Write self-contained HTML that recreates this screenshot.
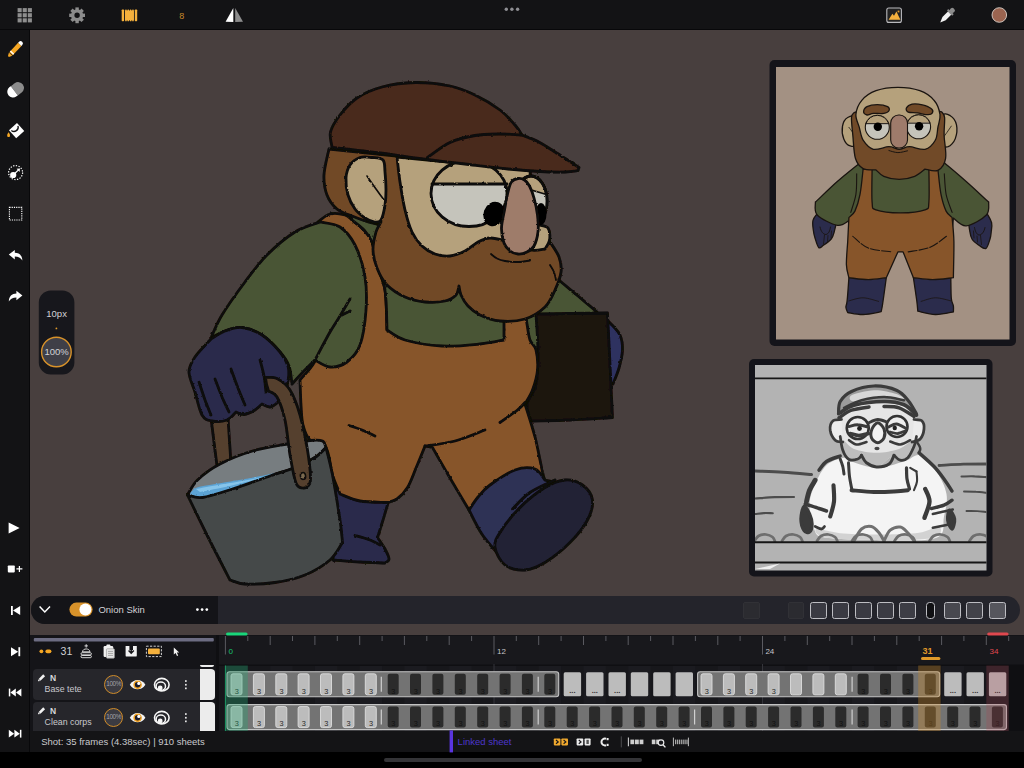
<!DOCTYPE html>
<html><head><meta charset="utf-8"><title>Animation</title>
<style>
*{box-sizing:border-box;margin:0;padding:0}
html,body{width:1024px;height:768px;overflow:hidden;background:#000;font-family:"Liberation Sans",sans-serif;}
.abs{position:absolute}
#app{position:relative;width:1024px;height:768px;background:#483f3e;overflow:hidden}
#top{left:0;top:0;width:1024px;height:30px;background:#131315;border-bottom:1px solid #08080a}
#side{left:0;top:30px;width:30px;height:722px;background:#131315;border-right:1px solid #08080a}
#bottomblack{left:0;top:752px;width:1024px;height:16px;background:#000}
#homebar{left:383.5px;top:758px;width:258px;height:4px;border-radius:2px;background:#343437}
#onion{left:31px;top:596px;width:989px;height:28px;border-radius:14px;background:#24242b;overflow:hidden}
#onionL{left:0;top:0;width:187px;height:28px;background:#141418}
#tl{left:30px;top:635px;width:994px;height:117px;background:#141418}
#status{left:30px;top:731px;width:994px;height:21px;background:#141416}

.t{position:absolute;white-space:nowrap;color:#c9c9cd;font-size:9.5px;line-height:12px}
.lay{position:absolute;left:33px;width:182px;height:31px;background:#26262b;border-radius:4px;overflow:hidden}
.lay .th{position:absolute;left:166.5px;top:0;width:16px;height:31px;background:#ececec;border-radius:0 4px 4px 0}
.oc{position:absolute;width:19px;height:19px;border-radius:50%;border:1.6px solid #d08c2a;background:#3b3b42;color:#a2a2aa;font-size:6.4px;line-height:15.8px;letter-spacing:-0.35px;text-align:center}
.sq{position:absolute;top:5.5px;width:17px;height:17px;border-radius:2.5px;border:1.2px solid #bdbdc2;background:#3b3b43}
.sqd{position:absolute;top:5.5px;width:16.5px;height:17px;border-radius:2px;background:#2b2b30;border:1px solid #313136}

</style></head><body>
<div id="app">
<svg class="abs" style="left:0;top:0" width="1024" height="768" viewBox="0 0 1024 768" stroke-linejoin="round" stroke-linecap="round">
<defs><filter id="rough" x="-2%" y="-2%" width="104%" height="104%"><feTurbulence type="fractalNoise" baseFrequency="0.28" numOctaves="2" seed="4" result="n"/><feDisplacementMap in="SourceGraphic" in2="n" scale="2.2" xChannelSelector="R" yChannelSelector="G"/></filter></defs>
<g filter="url(#rough)">
<path d="M603 316C604.5 317.5 609.2 321.8 612 325C614.8 328.2 618.2 330.8 620 335C621.8 339.2 622.7 344.5 622.5 350C622.3 355.5 620.6 362.3 619 368C617.4 373.7 614 381.3 613 384L603 384Z" fill="#2e3160" stroke="#0d0907" stroke-width="2.8" />
<path d="M515 285C521.3 284 545.5 279.7 553 279C560.5 278.3 558.8 280.7 560 281C563 283.5 571.8 290.8 578 296C584.2 301.2 593.8 309.3 597 312C588.3 315 555 323.3 545 330C535 336.7 542 352 537 352C532 352 518.7 333.7 515 330Z" fill="#4a5535" stroke="#0d0907" stroke-width="2.8" />
<path d="M536 314L607.5 313C607.9 321.7 609.2 347.6 610 365C610.8 382.4 612.1 408.8 612.5 417.5C605.4 417.9 583.6 419.4 570 420C556.4 420.6 537.5 420.8 531 421C530.3 418.2 526.2 410 527 404C527.8 398 534.2 393.7 536 385C537.8 376.3 538 363.8 538 352C538 340.2 536.3 320.3 536 314Z" fill="#1d1510" stroke="#0d0907" stroke-width="2.8" />
<path d="M333 488L388 503C387.2 505.8 384.8 514.2 383 520C381.2 525.8 378.4 534.6 377.5 537.5C378.8 539.4 383.1 545.4 385 549C386.9 552.6 389 556.7 389 559C389 561.3 385.7 562.3 385 563C380.8 562.8 368.7 562.5 360 562C351.3 561.5 337.5 560.3 333 560Z" fill="#2b2c4c" stroke="#0d0907" stroke-width="2.8" />
<path d="M355 535.5C357.5 536.2 365.8 538.4 370 540C374.2 541.6 378.3 544.2 380 545" fill="none" stroke="#0d0907" stroke-width="2.8"/>
<path d="M318 222C320 220.7 325.5 215.2 330 214C334.5 212.8 341.3 214 345 215C348.7 216 350.8 219.2 352 220C354 221.7 360.7 226.3 364 230C367.3 233.7 369.8 236.2 372 242C374.2 247.8 374.8 257 377 265C379.2 273 383.3 279.2 385 290C386.7 300.8 386.7 323.3 387 330L504 330C504 327.7 500.3 318.3 504 316C507.7 313.7 522.3 316 526 316C526.2 317.3 526.3 320 527 324C527.7 328 528.5 335.7 530 340C531.5 344.3 534.8 345 536 350C537.2 355 538.1 363.3 537.5 370C536.9 376.7 534.6 384.3 532.5 390C530.4 395.7 526.2 401.7 525 404C526.7 409.5 532.1 425.7 535 437C537.9 448.3 540.7 464.2 542.5 472C544.3 479.8 545.4 482 546 484L469 510C465.8 504.7 456.1 488.4 450 478C443.9 467.6 435.4 452.6 432.5 447.5L425 446C423.5 449.7 418.9 461.1 416 468C413.1 474.9 410.7 482.3 407.5 487.5C404.3 492.7 400.4 496.5 397 499C393.6 501.5 388.7 501.9 387 502.5C382.5 502.2 367.8 502.4 360 501C352.2 499.6 343.3 495.2 340 494C338.8 490.8 334.8 482.7 332.5 475C330.2 467.3 329.8 453.8 326 448C322.2 442.2 313.8 443.8 310 440C306.2 436.2 304.5 430.8 303 425C301.5 419.2 301.5 412.5 301 405C300.5 397.5 300.2 384.2 300 380C303 375.8 313 368.3 318 355C323 341.7 330 322.2 330 300C330 277.8 320 235 318 222Z" fill="#87552a" stroke="#0d0907" stroke-width="2.8" />
<path d="M425 446C430 445.2 445 443.7 455 441C465 438.3 480 431.8 485 430" fill="none" stroke="#0d0907" stroke-width="2.8"/>
<path d="M500 422.5C502.9 420.4 513.3 413.3 517.5 410C521.7 406.7 523.8 403.8 525 402.5" fill="none" stroke="#0d0907" stroke-width="2.8"/>
<path d="M349 425.5C351.2 426.2 357.7 428.2 362 430C366.3 431.8 372.8 435 375 436" fill="none" stroke="#0d0907" stroke-width="2.8"/>
<path d="M350 214C352.5 215 359.7 218 365 220C370.3 222 379.2 225 382 226C388.3 231.7 399.7 247.7 420 260C440.3 272.3 490 293.3 504 300L504 340C500 340.7 490.3 343 480 344C469.7 345 454.5 346.7 442 346C429.5 345.3 414.2 342.7 405 340C395.8 337.3 390 331.7 387 330C386.7 323.3 386.7 300.8 385 290C383.3 279.2 379.2 273 377 265C374.8 257 374.2 247.8 372 242C369.8 236.2 367.3 233.7 364 230C360.7 226.3 354 221.7 352 220Z" fill="#4a5535" stroke="#0d0907" stroke-width="2.8" />
<path d="M469 510C470.5 507.8 474.5 501.2 478 497C481.5 492.8 483.8 489.5 490 485C496.2 480.5 507.5 472.7 515 470C522.5 467.3 530 467.3 535 469C540 470.7 543.3 478.2 545 480C547.5 481.7 560.8 480 560 490C559.2 500 550 529 540 540C530 551 506.7 553.3 500 556C497.1 552.5 487.7 542.7 482.5 535C477.3 527.3 471.2 514.2 469 510Z" fill="#2e3054" stroke="#0d0907" stroke-width="2.8" />
<path d="M495 547.5C494.2 542.1 495.8 539.2 500 532.5C504.2 525.8 512.5 515 520 507.5C527.5 500 537.5 492.1 545 487.5C552.5 482.9 558.8 480.4 565 480C571.2 479.6 577.9 481.7 582.5 485C587.1 488.3 591.7 494.2 592.5 500C593.3 505.8 591.2 512.9 587.5 520C583.8 527.1 577.1 535.4 570 542.5C562.9 549.6 552.5 557.9 545 562.5C537.5 567.1 531.7 569.6 525 570C518.3 570.4 510 568.8 505 565C500 561.2 495.8 552.9 495 547.5Z" fill="#222236" stroke="#0d0907" stroke-width="2.8" />
<path d="M512.5 509C515.4 506.2 522.9 497.3 530 492.5C537.1 487.7 550.8 482.1 555 480" fill="none" stroke="#0d0907" stroke-width="2.8"/>
<path d="M211 418L228 418L231 464L217.5 470Z" fill="#54412f" stroke="#0d0907" stroke-width="2.8" />
<path d="M187.5 495C189.2 492.5 192.1 485.2 197.5 480C202.9 474.8 210.8 468.8 220 464C229.2 459.2 241.2 454.3 252.5 451C263.8 447.7 277.9 445.8 287.5 444C297.1 442.2 304.2 441 310 440.5C315.8 440 319.8 439.8 322.5 441C325.2 442.2 325.4 446.4 326 447.5C324.2 449.2 320.2 454.2 315 457.5C309.8 460.8 302.5 464.4 295 467.5C287.5 470.6 280.4 472.4 270 476C259.6 479.6 243.8 485.4 232.5 489C221.2 492.6 210 496.5 202.5 497.5C195 498.5 190 495.4 187.5 495Z" fill="#777d80" stroke="#0d0907" stroke-width="2.8" />
<path d="M190 493.5C191.2 492.5 192.8 489.1 197 487.5C201.2 485.9 207 485.4 215 484C223 482.6 234.8 480.8 245 479C255.2 477.2 270.8 474 276 473C275 473.5 277.2 473.3 270 476C262.8 478.7 243.8 485.5 232.5 489C221.2 492.5 209.6 496.2 202.5 497C195.4 497.8 192.1 494.1 190 493.5Z" fill="#5ba3d4"/>
<path d="M196 489C199.2 488.4 206.8 486.9 215 485.5C223.2 484.1 236.2 482.1 245 480.5C253.8 478.9 264.2 476.8 268 476C262 477.6 243.3 482.8 232 485.5C220.7 488.2 205.3 490.9 200 492Z" fill="#86c4ea"/>
<path d="M187.5 495C190.9 502 200.9 522.8 208 537C215.1 551.2 226.3 572.8 230 580C232.5 580.7 237.5 583.6 245 584C252.5 584.4 265 584 275 582.5C285 581 295.8 578.8 305 575C314.2 571.2 323.8 565.4 330 560C336.2 554.6 340.4 545.4 342.5 542.5C342.1 538.8 341.7 531.2 340 520C338.3 508.8 334.8 487.1 332.5 475C330.2 462.9 327.1 452.1 326 447.5C324.2 449.2 320.2 454.2 315 457.5C309.8 460.8 302.5 464.4 295 467.5C287.5 470.6 280.4 472.4 270 476C259.6 479.6 243.8 485.4 232.5 489C221.2 492.6 210 496.5 202.5 497.5C195 498.5 190 495.4 187.5 495Z" fill="#454a4a" stroke="#0d0907" stroke-width="2.8" />
<path d="M320 222C315.8 223.7 303.8 226.5 295 232C286.2 237.5 275.3 246.7 267 255C258.7 263.3 252.5 272 245 282C237.5 292 227.7 305.7 222 315C216.3 324.3 212.8 334.2 211 338C213.3 336.8 219.8 332.8 225 331C230.2 329.2 235.8 326.8 242 327.5C248.2 328.2 255.7 330.9 262 335C268.3 339.1 275.5 346.8 280 352C284.5 357.2 287 360.7 289 366C291 371.3 291.5 381 292 384C293.8 382 299.2 376 303 372C306.8 368 313 362 315 360C317.5 361.2 324.7 366.7 330 367C335.3 367.3 342 365.7 347 362C352 358.3 356.8 353.7 360 345C363.2 336.3 365.2 321.3 366 310C366.8 298.7 366.8 287.8 365 277C363.2 266.2 359.2 253.3 355 245C350.8 236.7 345.8 230.8 340 227C334.2 223.2 323.3 222.8 320 222Z" fill="#4a5535" stroke="#0d0907" stroke-width="2.8" />
<path d="M350 299C348.3 301.8 343.3 310.5 340 316C336.7 321.5 334.2 324.7 330 332C325.8 339.3 317.5 355.3 315 360" fill="none" stroke="#0d0907" stroke-width="2.8"/>
<path d="M342 315L350 311" fill="none" stroke="#0d0907" stroke-width="2.8"/>
<path d="M211 339C213.3 337.7 219.8 332.9 225 331C230.2 329.1 235.8 326.8 242 327.5C248.2 328.2 255.7 330.9 262 335C268.3 339.1 275.7 346.8 280 352C284.3 357.2 286.6 361.7 288 366C289.4 370.3 289 373.7 288.5 378C288 382.3 286.8 388 285 392C283.2 396 280.5 399.5 278 402C275.5 404.5 272.7 406.7 270 407C267.3 407.3 263.3 404.5 262 404C260.8 405 258 408.2 255 410C252 411.8 247.2 414.2 244 414.5C240.8 414.8 237.3 412.4 236 412C234.5 413.3 231 418.5 227 420C223 421.5 216.2 421.8 212 421C207.8 420.2 204.8 419.8 202 415C199.2 410.2 197.2 399.2 195 392C192.8 384.8 189 377.8 189 372C189 366.2 191.3 362.5 195 357C198.7 351.5 208.3 342 211 339Z" fill="#2b2c4c" stroke="#0d0907" stroke-width="2.8" />
<path d="M199 382C200 385 203 394.5 205 400C207 405.5 210 412.5 211 415" fill="none" stroke="#0d0907" stroke-width="2.8"/>
<path d="M215 379C216.2 382 219.7 391.5 222 397C224.3 402.5 227.8 409.5 229 412" fill="none" stroke="#0d0907" stroke-width="2.8"/>
<path d="M231 369C232.2 372.2 235.7 382 238 388C240.3 394 243.8 402.2 245 405" fill="none" stroke="#0d0907" stroke-width="2.8"/>
<path d="M260 360C260.7 362.7 263 370.7 264 376C265 381.3 265.7 389.3 266 392" fill="none" stroke="#0d0907" stroke-width="2.8"/>
<path d="M265.5 377.5C267.4 377.7 272.9 376.4 277 378.5C281.1 380.6 286.2 383.9 290 390C293.8 396.1 297.1 405 300 415C302.9 425 305.8 439.5 307.5 450C309.2 460.5 310.4 472 310.5 478C310.6 484 309.3 484.3 308 486C306.7 487.7 304.5 488.5 302.5 488C300.5 487.5 298.1 488.5 296 483C293.9 477.5 291.8 465.5 290 455C288.2 444.5 287.2 429.7 285 420C282.8 410.3 279.8 401.8 277 397C274.2 392.2 269.9 392 268.5 391C268.2 389.8 267 386.2 266.5 384C266 381.8 265.7 378.6 265.5 377.5Z" fill="#54412f" stroke="#0d0907" stroke-width="2.8" />
<ellipse cx="303" cy="476" rx="2.6" ry="3.4" fill="#7a6a50" stroke="#0d0907" stroke-width="1.5" transform="rotate(-10 303 476)"/>
<path d="M329 149C328.2 153.3 324.3 167.3 324 175C323.7 182.7 324.8 189.3 327 195C329.2 200.7 332.8 205.5 337 209C341.2 212.5 346.2 213.7 352 216C357.8 218.3 367.2 222 372 223C376.8 224 379.5 222.2 381 222C380.2 223.7 377.3 227.3 376 232C374.7 236.7 372.8 244 373 250C373.2 256 374.7 262.2 377 268C379.3 273.8 382.3 280.2 387 285C391.7 289.8 398.7 294.2 405 297C411.3 299.8 418.3 301.3 425 302C431.7 302.7 439.8 302.2 445 301C450.2 299.8 453.7 297.5 456 295C458.3 292.5 458.5 287.5 459 286C459.3 287.5 459.5 291.7 461 295C462.5 298.3 464.8 302.7 468 306C471.2 309.3 474.7 312.5 480 315C485.3 317.5 492.5 320.3 500 321C507.5 321.7 517.5 321.3 525 319C532.5 316.7 540 311.8 545 307C550 302.2 552.3 295.8 555 290C557.7 284.2 560.3 277.5 561 272C561.7 266.5 560.8 262 559 257C557.2 252 551.5 244.5 550 242C548.7 240.3 545 236.5 542 232C539 227.5 534 225.3 532 215C530 204.7 530.3 177.5 530 170L329 149Z" fill="#714a28" stroke="#0d0907" stroke-width="2.8" />
<path d="M383 160C380.8 157.6 375.8 157.9 372 157.5C368.2 157.1 363.7 156.2 360 157.5C356.3 158.8 352.3 161.6 350 165C347.7 168.4 346.3 173 346 178C345.7 183 346.5 189.8 348 195C349.5 200.2 352.2 205.2 355 209C357.8 212.8 361.8 215.8 365 218C368.2 220.2 371.3 221.7 374 222C376.7 222.3 379.2 222.8 381 220C382.8 217.2 384.2 210 385 205C385.8 200 386 195.5 386 190C386 184.5 385.5 177 385 172C384.5 167 385.2 162.4 383 160Z" fill="#b5a17c" stroke="#0d0907" stroke-width="2.8" />
<path d="M367 176C368.5 178.2 373.2 185 376 189C378.8 193 382.7 198.2 384 200" fill="none" stroke="#0d0907" stroke-width="1.6"/>
<path d="M397 157L530 170C530.2 173.3 530.5 183 531 190C531.5 197 531.7 206.2 533 212C534.3 217.8 538 222.8 539 225C540.5 225.5 546.2 225.5 548 228C549.8 230.5 550 236.5 549.5 240C549 243.5 545.8 247.5 545 249C542.5 249.2 536.7 251.3 530 250C523.3 248.7 511.7 243 505 241C498.3 239 494.5 237.8 490 238C485.5 238.2 482.2 239.8 478 242C473.8 244.2 469.7 248.7 465 251C460.3 253.3 455 255.5 450 256C445 256.5 439.7 255.7 435 254C430.3 252.3 425.8 249.7 422 246C418.2 242.3 414.8 238 412 232C409.2 226 407 218.3 405 210C403 201.7 401.3 190.8 400 182C398.7 173.2 397.5 161.2 397 157Z" fill="#b5a17c" stroke="#0d0907" stroke-width="2.8" />
<defs><clipPath id="lid2"><path d="M510 190.5L535 190.5L548 194.5L560 194L560 240L510 240Z"/></clipPath><clipPath id="lid1"><rect x="420" y="184" width="100" height="60"/></clipPath></defs>
<ellipse cx="531" cy="201" rx="16" ry="25" fill="#b5a17c" stroke="#0d0907" stroke-width="2.8"/>
<ellipse cx="531" cy="201" rx="16" ry="25" fill="#c5c4bb" clip-path="url(#lid2)"/>
<path d="M533 190.5L546.5 194.5" fill="none" stroke="#0d0907" stroke-width="1.8"/>
<ellipse cx="531" cy="201" rx="16" ry="25" fill="none" stroke="#0d0907" stroke-width="2.8"/>
<ellipse cx="541" cy="214" rx="5.5" ry="11" fill="#000"/>
<ellipse cx="469" cy="193.5" rx="38" ry="33" fill="#b5a17c"/>
<ellipse cx="469" cy="193.5" rx="38" ry="33" fill="#c5c4bb" clip-path="url(#lid1)"/>
<path d="M432 184L507 184" fill="none" stroke="#0d0907" stroke-width="2.8"/>
<ellipse cx="469" cy="193.5" rx="38" ry="33" fill="none" stroke="#0d0907" stroke-width="2.8"/>
<ellipse cx="494" cy="214" rx="10.5" ry="12.5" fill="#000" transform="rotate(20 494 214)"/>
<path d="M518 178.5C515.8 178.8 513.2 179.8 511.5 182C509.8 184.2 509.2 187.3 508 192C506.8 196.7 505.6 204 504.5 210C503.4 216 501.6 222.5 501.5 228C501.4 233.5 502.6 239.2 504 243C505.4 246.8 507.7 249.2 510 251C512.3 252.8 515.2 253.8 518 254C520.8 254.2 524.3 253.3 527 252C529.7 250.7 532.2 249.3 534 246C535.8 242.7 537.4 237.2 538 232C538.6 226.8 538.2 220.7 537.5 215C536.8 209.3 535.3 202.8 534 198C532.7 193.2 531.1 189 529.5 186C527.9 183 526.4 181.2 524.5 180C522.6 178.8 520.2 178.2 518 178.5Z" fill="#9e7b6b" stroke="#0d0907" stroke-width="2.8" />
<path d="M491 254C492 254.8 494.7 257.3 497 258.5C499.3 259.7 501.5 260.4 505 261C508.5 261.6 513.8 262.1 518 262C522.2 261.9 528 260.8 530 260.5" fill="none" stroke="#0d0907" stroke-width="1.8"/>
<path d="M550 265C550.7 266.2 553 269.5 554 272C555 274.5 555.7 278.7 556 280" fill="none" stroke="#0d0907" stroke-width="1.8"/>
<path d="M332 147C331.8 144.5 329.2 137.3 330.5 132C331.8 126.7 335.6 120.7 340 115C344.4 109.3 350 102.7 357 98C364 93.3 372.3 89.6 382 87C391.7 84.4 403.7 82.7 415 82.5C426.3 82.3 440 83.9 450 86C460 88.1 466.7 91 475 95C483.3 99 493.3 105 500 110C506.7 115 511.3 120.8 515 125C518.7 129.2 520.8 133.3 522 135C524.5 136 532 138.5 537 141C542 143.5 547.2 147 552 150C556.8 153 561.5 156.1 566 159C570.5 161.9 576.8 166.1 579 167.5L578 170.5C575.8 170.8 571.3 171.8 565 172C558.7 172.2 549.5 172 540 171.5C530.5 171 520.5 170.2 508 169C495.5 167.8 479.2 165.7 465 164C450.8 162.3 437.2 160.8 423 159C408.8 157.2 395.2 154.9 380 153C364.8 151.1 340 148.4 332 147.5Z" fill="#48291c" stroke="#0d0907" stroke-width="2.8" />
<path d="M427.5 157.5C431.2 155 442.1 146.2 450 142.5C457.9 138.8 466.7 136.9 475 135.5C483.3 134.1 492.2 134.1 500 134C507.8 133.9 518.3 134.8 522 135" fill="none" stroke="#0d0907" stroke-width="2.8"/>
</g>
<rect x="769.5" y="60" width="246.5" height="286" rx="5" fill="#14141a"/>
<rect x="776" y="67" width="233.5" height="272.5" fill="#a39183"/>
<path d="M820 208C817.3 208.1 819.2 210.4 818 212.5C816.8 214.6 813.8 217.4 813 220.3C812.2 223.2 813 227.1 813.3 230C813.6 232.9 814.1 235.1 815 238C815.9 240.9 817.4 246.5 818.8 247.7C820.1 248.9 821.3 246.8 823.4 245.3C825.5 243.9 829.4 241.3 831.2 239C833.1 236.7 833.6 234.1 834.4 231.2C835.2 228.4 836.1 225.2 836 222C835.9 218.8 836.7 214.3 834 212C831.3 209.7 822.7 207.9 820 208Z" fill="#2b2c4c" stroke="#1a1410" stroke-width="1.3"/>
<path d="M984 208C986.6 208.2 985.6 210.9 986.9 213.3C988.2 215.8 990.9 219.6 991.6 222.7C992.3 225.8 991.5 229.3 991.2 232C990.9 234.7 990.9 236.3 990 239C989.1 241.7 987.8 247.3 986 248.4C984.2 249.5 981.3 246.9 979 245.3C976.7 243.7 973.6 241.6 972 239C970.4 236.4 970.1 232.8 969.6 230C969.1 227.2 968.6 225 968.8 222C969 219 968.5 214.3 971 212C973.5 209.7 981.4 207.8 984 208Z" fill="#2b2c4c" stroke="#1a1410" stroke-width="1.3"/>
<path d="M820 227C821 232 823.5 234.5 826 234.5C828.5 234 830 231 830.5 227" fill="none" stroke="#1a1410" stroke-width="0.9" />
<path d="M824.5 235L823.5 244M828 235.5L827.5 241.5M831.5 231L831 237.5" fill="none" stroke="#1a1410" stroke-width="0.8" />
<path d="M985 227.5C984 232.5 981.5 235 979 235C976.5 234.5 975 231 974.5 227.5" fill="none" stroke="#1a1410" stroke-width="0.9" />
<path d="M980.5 235.5L981.5 244.5M977 236L977.5 242M973.5 231L974 238" fill="none" stroke="#1a1410" stroke-width="0.8" />
<path d="M859.3 163.4C855.6 166.4 844.6 175 837.3 181.5C830 187.9 819.1 198.7 815.4 202.1C815.7 204.3 813.6 211.1 817.2 215C820.9 218.9 832.1 224.4 837.3 225.3C842.6 226.3 847 221.4 848.9 220.7L850.8 230.5L952.1 230.5L953.4 218.1C955.5 219.4 960.8 226.3 966.2 225.8C971.8 225.3 982.6 219 986.4 215C990.1 211 988.3 204.3 988.7 202.1C984.9 198.7 973.5 187.9 966.2 181.5C959 175 948.6 166.4 945.1 163.4C937.9 161.7 916.1 153.1 901.8 153.1C887.5 153.1 866.3 161.7 859.3 163.4Z" fill="#4a5535" stroke="#1a1410" stroke-width="1.3"/>
<path d="M856.7 173.8C856.6 177.2 856.9 187.9 855.9 194.4C854.9 200.8 851.6 209.4 850.8 212.4" fill="none" stroke="#1a1410" stroke-width="1.1" />
<path d="M944.3 173.8C944.6 177.2 944.9 187.9 946.1 194.4C947.4 200.8 951.1 209.4 952.1 212.4" fill="none" stroke="#1a1410" stroke-width="1.1" />
<path d="M848.9 277.7C848.6 281.5 847.7 295.9 847.1 300.9C846.6 305.8 845.8 305.4 845.9 307.3C845.9 309.2 847.4 311.6 847.7 312.5C850.2 312.8 857.5 314.7 863.1 314.5C868.7 314.4 878.2 312.2 881.2 311.7C881.4 310.3 881.9 309.1 882.7 303.4C883.6 297.8 885.7 282 886.3 277.7Z" fill="#2b2c4c" stroke="#1a1410" stroke-width="1.3"/>
<path d="M913.4 277.7C914 281.5 916 295.3 916.8 300.9C917.5 306.4 917.6 309.5 917.8 311.2C920.7 311.7 929.4 314.4 935.3 314.5C941.2 314.7 950.4 312.4 953.4 311.9C953.4 311 953.7 308.3 953.4 306C953 303.7 951.7 303 951.3 298.3C950.9 293.6 950.9 281.1 950.8 277.7Z" fill="#2b2c4c" stroke="#1a1410" stroke-width="1.3"/>
<path d="M848.9 300.9C851.3 300.3 858.2 297.7 863.1 297.8C868.1 297.9 876 300.8 878.6 301.4" fill="none" stroke="#1a1410" stroke-width="0.8" />
<path d="M921.1 301.4C923.5 300.8 930.4 297.9 935.3 297.8C940.3 297.7 948.2 300.3 950.8 300.9" fill="none" stroke="#1a1410" stroke-width="0.8" />
<path d="M863.1 169.1L872.1 169.1C872.1 174.6 871.5 195.3 872.1 202.1C872.8 208.9 871.3 208 876 209.8C880.7 211.6 892.3 212.9 900.5 212.9C908.7 212.9 920.3 211.6 925 209.8C929.7 208 928.2 208.9 928.9 202.1C929.5 195.3 928.9 174.6 928.9 169.1L937.9 169.1C938.4 173.3 939.6 187.4 941 194.4C942.4 201.4 944.3 207.3 946.1 211.1C948 215 951.1 216.5 952.1 217.6L952.1 217.6C952.4 221.6 953.7 231.6 953.9 241.6C954.1 251.6 953.4 271.6 953.4 277.7C949.9 278 939.4 279.7 932.7 279.7C926.1 279.7 916.6 278 913.4 277.7L903.1 251.9L897.9 251.9L886.3 277.7C883.3 278 874.5 279.7 868.3 279.7C862.1 279.7 852.2 278 848.9 277.7C848.5 275.5 846.6 270.8 846.4 264.8C846.2 258.8 847.2 249.4 847.7 241.6C848.1 233.7 848.7 221.6 848.9 217.6L848.9 217.6C849.9 216.5 853 215 854.9 211.1C856.7 207.3 858.7 201.4 860 194.4C861.4 187.4 862.6 173.3 863.1 169.1Z" fill="#87552a" stroke="#1a1410" stroke-width="1.3"/>
<path d="M852.8 236.4C855.4 238.3 861.8 245.4 868.3 248C874.7 250.6 887.6 251.2 891.5 251.9" fill="none" stroke="#1a1410" stroke-width="1.1" stroke-dasharray="9 2"/>
<path d="M908.2 251.9C911.9 251.1 923.7 249.9 930.2 247.2C936.6 244.6 944.1 237.8 946.9 235.9" fill="none" stroke="#1a1410" stroke-width="1.1" stroke-dasharray="9 2"/>
<path d="M855.9 118.3C854.3 114.1 849.9 116.3 847.7 117.5C845.4 118.8 843.1 122.5 842.5 126.1C841.9 129.6 842.5 135.6 843.8 138.9C845.1 142.3 848 145.3 850.2 145.9C852.5 146.6 856.5 147.4 857.5 142.8C858.4 138.2 857.5 122.5 855.9 118.3Z" fill="#b5a17c" stroke="#1a1410" stroke-width="1.3"/>
<path d="M941.8 116.5C943.2 112 947.8 114.4 950.3 115.7C952.7 117.1 955.6 120.9 956.5 124.8C957.3 128.6 956.5 135.3 955.2 138.9C953.8 142.6 950.4 146 948.2 146.7C946 147.3 942.8 147.8 941.8 142.8C940.7 137.8 940.3 121 941.8 116.5Z" fill="#b5a17c" stroke="#1a1410" stroke-width="1.3"/>
<path d="M848.9 127.3C849.6 128.2 851.7 131 852.8 132.5C854 134 855.4 135.7 855.9 136.4" fill="none" stroke="#1a1410" stroke-width="0.8" />
<path d="M951.3 126.1C950.6 127.1 948.2 130.7 946.9 132.5C945.6 134.3 944.1 136.4 943.6 137.1" fill="none" stroke="#1a1410" stroke-width="0.8" />
<path d="M854.1 112.6C853.7 113.5 851.7 113.8 851.5 117.5C851.3 121.3 852.2 128.3 852.8 135.1C853.5 141.9 853.7 152.7 855.4 158.3C857.1 163.9 859.7 166.7 863.1 168.6C866.6 170.5 873.9 169.7 876 169.9C877.3 171 879.9 174.7 883.8 176.3C887.6 177.9 894.1 179.4 899.2 179.4C904.4 179.4 910.4 178 914.7 176.3C919 174.6 923.3 170.3 925 169.1C927.1 169.3 934.5 172.2 937.9 170.4C941.3 168.6 944.6 164.2 945.6 158.3C946.7 152.4 944.2 141.9 944.1 135.1C943.9 128.3 945 121.4 944.6 117.5C944.2 113.7 942.2 112.8 941.8 111.9C934.5 110.2 912.5 101.4 897.9 101.6C883.3 101.7 861.4 110.8 854.1 112.6Z" fill="#714a28" stroke="#1a1410" stroke-width="1.3"/>
<path d="M897.9 87.4C890.6 87.4 882 88.6 876 90.7C870 92.9 865.2 96.3 861.8 100.3C858.5 104.2 856.3 109.9 855.9 114.5C855.5 119 858.1 123 859.3 127.3C860.5 131.6 860.8 136.6 863.1 140.2C865.5 143.9 869.1 148.2 873.4 149.3C877.7 150.3 884.6 146.7 888.9 146.7C893.2 146.7 895.8 149.3 899.2 149.3C902.7 149.3 905.2 146.7 909.5 146.7C913.8 146.7 920.7 150.3 925 149.3C929.3 148.2 933.2 143.9 935.3 140.2C937.5 136.6 937.1 131.6 937.9 127.3C938.7 123 940.6 119 940 114.5C939.3 109.9 937.4 104.2 934 100.3C930.7 96.3 925.9 92.9 919.8 90.7C913.8 88.6 905.2 87.4 897.9 87.4Z" fill="#b5a17c" stroke="#1a1410" stroke-width="1.3"/>
<path d="M863.6 111.9C863.6 110.5 864.7 107.9 867 106.7C869.3 105.5 873.9 104.7 877.3 104.7C880.7 104.7 885.7 105.7 887.6 106.7C889.6 107.8 889.6 109.7 888.9 110.8C888.3 112 886.3 113 883.8 113.4C881.2 113.9 876.2 113.2 873.4 113.4C870.6 113.7 868.6 115.2 867 115C865.4 114.7 863.6 113.2 863.6 111.9Z" fill="#714a28" stroke="#1a1410" stroke-width="1.3"/>
<path d="M906.4 108C907.1 106.7 909.4 104.7 912.1 104.1C914.8 103.6 919.2 104.1 922.4 104.9C925.6 105.7 929.8 107.4 931.4 108.8C933.1 110.2 932.9 112.2 932.2 113.2C931.6 114.2 930.1 114.8 927.6 114.7C925.1 114.7 920.5 113.3 917.3 112.9C914 112.5 910 112.9 908.2 112.1C906.4 111.3 905.8 109.3 906.4 108Z" fill="#714a28" stroke="#1a1410" stroke-width="1.3"/>
<circle cx="877.3" cy="127.3" r="12" fill="#c5c4bb" stroke="#1a1410" stroke-width="1.1"/>
<path d="M866 123.3A12 12 0 0 1 888.6 123.3Z" fill="#b5a17c" stroke="#1a1410" stroke-width="1"/>
<circle cx="877.8" cy="126.8" r="4.2" fill="#000"/>
<circle cx="918.6" cy="126.8" r="12" fill="#c5c4bb" stroke="#1a1410" stroke-width="1.1"/>
<path d="M907.3 122.8A12 12 0 0 1 929.9 122.8Z" fill="#b5a17c" stroke="#1a1410" stroke-width="1"/>
<circle cx="919.1" cy="126.3" r="4.2" fill="#000"/>
<rect x="890.7" y="115" width="16.8" height="33" rx="8" fill="#9e7b6b" stroke="#1a1410" stroke-width="1.1"/>
<path d="M888.9 150.5C890.4 150.9 894.8 152.6 897.9 152.6C901 152.7 905.9 151.1 907.5 150.8" fill="none" stroke="#1a1410" stroke-width="1" />
<rect x="749" y="359" width="243.5" height="217.5" rx="5" fill="#14141a"/>
<rect x="755" y="365" width="231.5" height="205.5" fill="#b3b3b3"/>
<clipPath id="p2c"><rect x="755" y="365" width="231.5" height="205.5"/></clipPath><g clip-path="url(#p2c)">
<path d="M755.2 471C759.9 471.2 774 471.7 783.4 472.2C792.8 472.8 806.8 474.1 811.5 474.5" fill="none" stroke="#4c4c4c" stroke-width="3.036" opacity="1"/>
<path d="M755.2 498.5C758.5 498.3 768.2 497.5 774.6 497.2C781.1 497 790.8 497 794 497" fill="none" stroke="#4c4c4c" stroke-width="2.2079999999999997" opacity="1"/>
<path d="M755.2 514C756.7 513.9 761.1 513.2 764 513.1C766.9 513 771.3 513.2 772.8 513.2" fill="none" stroke="#4c4c4c" stroke-width="2.07" opacity="1"/>
<path d="M939 465.5C943.1 465.3 955.2 464.5 963.4 464.2C971.5 464 983.7 464 987.8 464" fill="none" stroke="#4c4c4c" stroke-width="2.76" opacity="1"/>
<path d="M961.5 476.5C963.7 476.5 970.2 476.2 974.6 476.4C979 476.5 985.6 477.1 987.8 477.2" fill="none" stroke="#4c4c4c" stroke-width="2.07" opacity="1"/>
<path d="M964 491.5C966 491.5 971.9 491.5 975.9 491.8C979.8 492 985.8 492.8 987.8 493" fill="none" stroke="#4c4c4c" stroke-width="1.9319999999999997" opacity="1"/>
<path d="M966.5 511C968.3 511 973.6 510.9 977.1 511.1C980.7 511.3 986 512.1 987.8 512.2" fill="none" stroke="#4c4c4c" stroke-width="1.9319999999999997" opacity="1"/>
<path d="M844 457.8C839.8 458.4 831.3 460.9 826.5 465.2C821.7 469.6 818.1 477.5 815.2 484C812.4 490.5 809.7 496.5 809.5 504C809.3 511.5 811.2 523.4 814 529C816.8 534.6 814.8 535.9 826.5 537.8C838.2 539.6 865.7 540.2 884 540.2C902.3 540.2 926.5 541.7 936.5 537.8C946.5 533.8 942.3 523.8 944 516.5C945.7 509.2 947.8 501.5 946.5 494C945.2 486.5 940.9 478 936.5 471.5C932.1 465 925.7 456.9 920.2 455.2C914.8 453.6 911.3 459.4 904 461.5C896.7 463.6 885.2 467.8 876.5 467.8C867.8 467.8 856.9 463.2 851.5 461.5C846.1 459.8 848.2 457.1 844 457.8Z" fill="#f4f4f4" stroke="#3b3b3b" stroke-width="0.0" opacity="1"/>
<path d="M816.5 529C813.6 529.7 815.2 535.9 826.5 537.8C837.8 539.6 866.1 540.2 884 540.2C901.9 540.2 924.8 540 934 537.8C943.2 535.5 941.5 527.3 939 526.5C936.5 525.7 928.2 531.4 919 532.8C909.8 534.1 896.5 534.4 884 534.5C871.5 534.6 855.2 534.4 844 533.5C832.8 532.6 819.4 528.3 816.5 529Z" fill="#d2d2d2" stroke="#3b3b3b" stroke-width="0.0" opacity="1"/>
<path d="M840.2 416.5C838.8 422.5 841.3 431.9 842.8 439C844.2 446.1 845.9 456 849 459C852.1 462 856.9 455.7 861.5 457C866.1 458.3 871.5 467 876.5 467C881.5 467 886.7 458.2 891.5 457C896.3 455.8 901.5 462.5 905.2 459.5C909 456.5 912.1 446.2 914 439C915.9 431.8 918.2 422.5 916.5 416.5C914.8 410.5 910.7 405.7 904 402.8C897.3 399.8 885.2 399 876.5 399C867.8 399 857.5 399.8 851.5 402.8C845.5 405.7 841.7 410.5 840.2 416.5Z" fill="#e6e6e6" stroke="#3b3b3b" stroke-width="0.0" opacity="1"/>
<path d="M842.8 440.2C841.9 441.9 845.9 456.2 849 459C852.1 461.8 856.9 455.7 861.5 457C866.1 458.3 871.5 467 876.5 467C881.5 467 886.7 458.2 891.5 457C896.3 455.8 901.6 462.3 905.2 459.5C908.9 456.7 914.5 442 913.5 440.2C912.5 438.5 905.2 446.9 899 449C892.8 451.1 884 452.8 876.5 452.8C869 452.8 859.6 451.1 854 449C848.4 446.9 843.6 438.6 842.8 440.2Z" fill="#bdbdbd" stroke="#3b3b3b" stroke-width="0.0" opacity="1"/>
<path d="M841.5 419.5C840 419.8 834.6 419.2 832.8 421C830.9 422.8 829.8 427 830.2 430.2C830.7 433.5 833.2 438.3 835.2 440.2C837.3 442.2 841.5 441.7 842.8 442" fill="#ececec" stroke="#3b3b3b" stroke-width="2.76" opacity="1"/>
<path d="M914 419.5C915.3 419.8 920.3 419.4 922 421C923.7 422.6 924.3 426 924 429C923.7 432 922.2 436.8 920.2 439C918.2 441.2 913.4 441.5 912 442" fill="#ececec" stroke="#3b3b3b" stroke-width="2.76" opacity="1"/>
<path d="M839 412.8C836.3 412.1 838.2 405.1 840.2 401.5C842.3 397.9 845.9 393.6 851.5 391C857.1 388.4 866.5 386.1 874 386C881.5 385.9 890.9 387.9 896.5 390.2C902.1 392.6 904.4 396.5 907.8 400.2C911.1 404 916.3 411.5 916.5 412.8C916.7 414 914.4 409.4 909 407.8C903.6 406.1 892.8 403.2 884 402.8C875.2 402.3 864 403.6 856.5 405.2C849 406.9 841.7 413.4 839 412.8Z" fill="#9c9c9c" stroke="#3b3b3b" stroke-width="0.0" opacity="1"/>
<path d="M851.5 395.2C854.8 393.4 866.5 390.5 874 390.2C881.5 390 891.5 392.3 896.5 394C901.5 395.7 906.9 399.8 904 400.2C901.1 400.8 887.3 396.8 879 397C870.7 397.2 858.6 401.8 854 401.5C849.4 401.2 848.2 397.1 851.5 395.2Z" fill="#d8d8d8" stroke="#3b3b3b" stroke-width="0.0" opacity="1"/>
<path d="M838.5 414C838.8 411.9 838.1 405.2 840.2 401.5C842.4 397.8 845.9 394.1 851.5 391.5C857.1 388.9 866.4 386.2 874 386C881.6 385.8 891.2 388 897 390.5C902.8 393 905.2 397.1 908.5 401C911.8 404.9 915.2 411.8 916.5 414" fill="none" stroke="#3b3b3b" stroke-width="3.2199999999999998" opacity="1"/>
<path d="M840.2 412.8C842.5 411.5 846.7 407.1 854 405.2C861.3 403.4 875.7 401.6 884 401.5C892.3 401.4 898.6 402.5 904 404.8C909.4 407 914.4 413.5 916.5 415.2" fill="none" stroke="#3b3b3b" stroke-width="3.6799999999999997" opacity="1"/>
<path d="M844 407.8C846.9 406.5 854.8 402 861.5 400.2C868.2 398.5 876.9 397 884 397C891.1 397 900.7 399.7 904 400.2" fill="none" stroke="#3b3b3b" stroke-width="2.53" opacity="1"/>
<path d="M839 417.8C841.1 416.5 846.5 412 851.5 410.2C856.5 408.5 866.1 407.5 869 407" fill="none" stroke="#3b3b3b" stroke-width="3.4499999999999997" opacity="1"/>
<path d="M884 406.5C886.5 406.7 894 406.1 899 407.8C904 409.4 911.5 415 914 416.5" fill="none" stroke="#3b3b3b" stroke-width="3.4499999999999997" opacity="1"/>
<circle cx="857.75" cy="428.0" r="11" fill="#ededed" stroke="#333" stroke-width="2.6"/>
<circle cx="897.0" cy="426.5" r="10.5" fill="#ededed" stroke="#333" stroke-width="2.6"/>
<path d="M868.5 422.8C870 422.2 874.7 419.6 877.8 419.5C880.8 419.4 885.5 421.6 887 422" fill="none" stroke="#3b3b3b" stroke-width="2.76" opacity="1"/>
<path d="M849 426.5C850.5 426.2 854.6 424.7 857.8 424.8C860.9 424.8 866.1 426.6 867.8 427" fill="none" stroke="#3b3b3b" stroke-width="2.9899999999999998" opacity="1"/>
<path d="M850.2 433.5C851.7 433.8 856 435.5 859 435.5C862 435.5 866.9 433.8 868.5 433.5" fill="none" stroke="#3b3b3b" stroke-width="3.6799999999999997" opacity="1"/>
<circle cx="859.5" cy="428.5" r="2.4" fill="#222"/>
<path d="M888.5 427C889.8 426.5 893.6 423.8 896.5 424C899.4 424.2 904.4 427.8 906 428.5" fill="none" stroke="#3b3b3b" stroke-width="2.9899999999999998" opacity="1"/>
<path d="M890.2 432C891.5 432.2 895.2 433.7 897.8 433.5C900.2 433.3 904 431.4 905.2 431" fill="none" stroke="#3b3b3b" stroke-width="2.76" opacity="1"/>
<circle cx="894.75" cy="428.0" r="2.2" fill="#222"/>
<path d="M877.8 422.8C875.8 422.8 873 426.5 872 429C871 431.5 870.5 435.5 871.5 437.8C872.5 440 875.7 442.8 877.8 442.8C879.8 442.8 883 440 884 437.8C885 435.5 885 431.5 884 429C883 426.5 879.8 422.8 877.8 422.8Z" fill="#f2f2f2" stroke="#3b3b3b" stroke-width="2.9899999999999998" opacity="1"/>
<ellipse cx="877.0" cy="448.5" rx="2.6" ry="1.8" fill="#444"/>
<path d="M840.2 436.5C840.7 438.8 841.3 446.4 842.8 450.2C844.2 454.1 846.5 458 849 459.5C851.5 461 855.7 459.7 857.8 459C859.8 458.3 860.9 455.9 861.5 455.2" fill="none" stroke="#3b3b3b" stroke-width="2.76" opacity="1"/>
<path d="M861.5 455.2C862.3 456.5 864 460.8 866.5 462.8C869 464.7 872.8 466.8 876.5 467C880.2 467.2 886.1 466 889 464C891.9 462 893.2 456.7 894 455.2" fill="none" stroke="#3b3b3b" stroke-width="2.9899999999999998" opacity="1"/>
<path d="M894 455.2C895 456.1 898 459.8 900.2 460.2C902.5 460.7 905.5 460 907.8 457.8C910 455.5 912.5 450 914 446.5C915.5 443 916.1 438.2 916.5 436.5" fill="none" stroke="#3b3b3b" stroke-width="2.76" opacity="1"/>
<path d="M849 440.2C850.2 441 853.6 444.2 856.5 444.5C859.4 444.8 864.8 442.4 866.5 442" fill="none" stroke="#3b3b3b" stroke-width="2.53" opacity="1"/>
<path d="M890.2 441.5C891.9 442 896.9 444.7 900.2 444.5C903.6 444.3 908.6 441 910.2 440.2" fill="none" stroke="#3b3b3b" stroke-width="2.53" opacity="1"/>
<path d="M819 470.2C820.2 468.8 823 463.9 826.5 461.5C830 459.1 838 456.9 840.2 456" fill="none" stroke="#3b3b3b" stroke-width="3.4499999999999997" opacity="1"/>
<path d="M840.2 459C840.7 460.2 842.1 464 842.8 466.5C843.4 469 843.8 472.8 844 474" fill="none" stroke="#3b3b3b" stroke-width="2.9899999999999998" opacity="1"/>
<path d="M815.2 480.2C814.3 481.9 811 486.7 809.5 490.2C808 493.8 807 499.6 806.5 501.5" fill="none" stroke="#3b3b3b" stroke-width="4.83" opacity="1"/>
<path d="M833.5 485.2C833.6 488 834.5 496.3 834 501.5C833.5 506.7 830.9 514 830.2 516.5" fill="none" stroke="#3b3b3b" stroke-width="4.14" opacity="1"/>
<path d="M805.2 504C807.5 504.8 815.5 507.3 819 508.5C822.5 509.7 825.2 510.6 826.5 511" fill="none" stroke="#3b3b3b" stroke-width="3.4499999999999997" opacity="1"/>
<path d="M804 506.5C802.6 507.3 801 515 801 519C801 523 802.6 528.1 804 530.2C805.4 532.4 808.2 533 809.5 532C810.8 531 812 527 812 524C812 521 810.8 516.9 809.5 514C808.2 511.1 805.4 505.7 804 506.5Z" fill="#3b3b3b" stroke="#3b3b3b" stroke-width="3.4499999999999997" opacity="1"/>
<path d="M815.2 526.5C816.3 526.9 820 529 821.5 529C823 529 824 526.9 824.5 526.5" fill="none" stroke="#3b3b3b" stroke-width="2.76" opacity="1"/>
<path d="M919 452.8C921.5 455 929.8 462.1 934 466.5C938.2 470.9 941 474.9 944 479C947 483.1 950.7 489 952 491" fill="none" stroke="#3b3b3b" stroke-width="3.4499999999999997" opacity="1"/>
<path d="M916.5 441.5C917.1 442.5 919.8 445.9 920.2 447.8C920.7 449.6 919.2 451.9 919 452.8" fill="none" stroke="#3b3b3b" stroke-width="2.53" opacity="1"/>
<path d="M925.2 489C926 491.1 929.6 496.7 929.5 501.5C929.4 506.3 925.3 515 924.5 517.8" fill="none" stroke="#3b3b3b" stroke-width="4.369999999999999" opacity="1"/>
<path d="M931.5 508.5C933.6 508 940.6 506.6 944 505.2C947.4 503.9 950.7 501.1 952 500.2" fill="none" stroke="#3b3b3b" stroke-width="3.4499999999999997" opacity="1"/>
<path d="M932.8 514C934.6 513.6 940.7 512.2 944 511.5C947.3 510.8 951.3 509.8 952.8 509.5" fill="none" stroke="#3b3b3b" stroke-width="2.53" opacity="1"/>
<path d="M949.5 510.2C948.4 510.5 947.3 517.1 947.8 520.2C948.2 523.4 950.9 529.2 952 529C953.1 528.8 954.9 522.1 954.5 519C954.1 515.9 950.6 510 949.5 510.2Z" fill="#3b3b3b" stroke="#3b3b3b" stroke-width="3.4499999999999997" opacity="1"/>
<path d="M932.8 527.8C934.2 527.5 938.9 526.5 941.5 526C944.1 525.5 947.3 524.8 948.5 524.5" fill="none" stroke="#3b3b3b" stroke-width="2.53" opacity="1"/>
<path d="M848.5 462.8C848.7 465 848.9 471.9 849.5 476.5C850.1 481.1 851.6 488 852 490.2" fill="none" stroke="#3b3b3b" stroke-width="2.9899999999999998" opacity="1"/>
<path d="M851.5 490.2C855.2 490.5 866.9 491.8 874 492C881.1 492.2 888.4 491.8 894 491.5C899.6 491.2 905.5 490.5 907.8 490.2" fill="none" stroke="#3b3b3b" stroke-width="3.9099999999999997" opacity="1"/>
<path d="M906.5 467.8C906.6 469.6 906.5 475.5 907 479C907.5 482.5 909.1 487.3 909.5 489" fill="none" stroke="#3b3b3b" stroke-width="3.2199999999999998" opacity="1"/>
<path d="M916.5 471.5C916.6 473.2 917.4 478.4 917 481.5C916.6 484.6 914.5 488.8 914 490.2" fill="none" stroke="#3b3b3b" stroke-width="2.07" opacity="1"/>
<path d="M910.2 467.8L916.5 471.5" fill="none" stroke="#3b3b3b" stroke-width="2.07" opacity="1"/>
<path d="M754.5 541C755.2 540.2 756.6 537.1 758.5 536C760.4 534.9 763.7 534.3 766 534.5C768.3 534.7 771 535.8 772.5 537C774 538.2 774.6 540.8 775 541.5" fill="none" stroke="#6e6e6e" stroke-width="2.76" opacity="1"/>
<path d="M782 541C782.7 540.2 784.1 537.1 786 536C787.9 534.9 791.2 534.3 793.5 534.5C795.8 534.7 798.5 535.8 800 537C801.5 538.2 802.1 540.8 802.5 541.5" fill="none" stroke="#6e6e6e" stroke-width="2.76" opacity="1"/>
<path d="M817 541C817.7 540.2 819.1 537.1 821 536C822.9 534.9 826.2 534.3 828.5 534.5C830.8 534.7 833.5 535.8 835 537C836.5 538.2 837.1 540.8 837.5 541.5" fill="none" stroke="#6e6e6e" stroke-width="2.76" opacity="1"/>
<path d="M852 541C852.7 540.2 854.1 537.1 856 536C857.9 534.9 861.2 534.3 863.5 534.5C865.8 534.7 868.5 535.8 870 537C871.5 538.2 872.1 540.8 872.5 541.5" fill="none" stroke="#6e6e6e" stroke-width="2.76" opacity="1"/>
<path d="M894.5 541C895.2 540.2 896.6 537.1 898.5 536C900.4 534.9 903.7 534.3 906 534.5C908.3 534.7 911 535.8 912.5 537C914 538.2 914.6 540.8 915 541.5" fill="none" stroke="#6e6e6e" stroke-width="2.76" opacity="1"/>
<path d="M929.5 541C930.2 540.2 931.6 537.1 933.5 536C935.4 534.9 938.7 534.3 941 534.5C943.3 534.7 946 535.8 947.5 537C949 538.2 949.6 540.8 950 541.5" fill="none" stroke="#6e6e6e" stroke-width="2.76" opacity="1"/>
<path d="M969.5 541C970.2 540.2 971.6 537.1 973.5 536C975.4 534.9 978.7 534.3 981 534.5C983.3 534.7 986 535.8 987.5 537C989 538.2 989.6 540.8 990 541.5" fill="none" stroke="#6e6e6e" stroke-width="2.76" opacity="1"/>
<path d="M854 541C855.2 539 858.6 531.4 861.5 529C864.4 526.6 868.6 525.9 871.5 526.5C874.4 527.1 876.9 530.3 879 532.8C881.1 535.2 883.2 539.6 884 541" fill="none" stroke="#707070" stroke-width="2.9899999999999998" opacity="1"/>
<path d="M884 541C885 539.2 887.5 532.6 890.2 530.2C893 527.9 897.3 526.6 900.2 527C903.2 527.4 905.5 530.4 907.8 532.8C910 535.1 913 539.6 914 541" fill="none" stroke="#707070" stroke-width="2.9899999999999998" opacity="1"/>
<path d="M755 378.3L986.5 378.3" stroke="#161616" stroke-width="1.8"/>
<path d="M755 542.3L986.5 542.3" stroke="#161616" stroke-width="2"/>
<path d="M755 562.5L986.5 562.5" stroke="#161616" stroke-width="1.8"/>
<path d="M755 569L780 563.5L770 569Z" fill="#f0f0f0"/>
</g>
</svg>
<div class="abs" id="top"></div>
<div class="abs" id="side"></div>
<div class="abs" id="onion"><div class="abs" id="onionL"></div></div>
<div class="abs" id="tl"></div>
<div class="abs" id="status"></div>
<div class="abs" id="bottomblack"></div>
<div class="abs" id="homebar"></div>
<svg class="abs" style="left:0;top:0" width="1024" height="768" viewBox="0 0 1024 768">
<rect x="17.6" y="8.1" width="4.1" height="4.1" fill="#8e8e8e"/>
<rect x="22.7" y="8.1" width="4.1" height="4.1" fill="#8e8e8e"/>
<rect x="27.8" y="8.1" width="4.1" height="4.1" fill="#8e8e8e"/>
<rect x="17.6" y="13.2" width="4.1" height="4.1" fill="#8e8e8e"/>
<rect x="22.7" y="13.2" width="4.1" height="4.1" fill="#8e8e8e"/>
<rect x="27.8" y="13.2" width="4.1" height="4.1" fill="#8e8e8e"/>
<rect x="17.6" y="18.3" width="4.1" height="4.1" fill="#8e8e8e"/>
<rect x="22.7" y="18.3" width="4.1" height="4.1" fill="#8e8e8e"/>
<rect x="27.8" y="18.3" width="4.1" height="4.1" fill="#8e8e8e"/>
<circle cx="77.1" cy="15.3" r="4.4" fill="none" stroke="#8c8c8c" stroke-width="3.4"/>
<rect x="75.4" y="7.4" width="3.4" height="3.4" fill="#8c8c8c" transform="rotate(0 77.1 15.3)"/>
<rect x="75.4" y="7.4" width="3.4" height="3.4" fill="#8c8c8c" transform="rotate(45 77.1 15.3)"/>
<rect x="75.4" y="7.4" width="3.4" height="3.4" fill="#8c8c8c" transform="rotate(90 77.1 15.3)"/>
<rect x="75.4" y="7.4" width="3.4" height="3.4" fill="#8c8c8c" transform="rotate(135 77.1 15.3)"/>
<rect x="75.4" y="7.4" width="3.4" height="3.4" fill="#8c8c8c" transform="rotate(180 77.1 15.3)"/>
<rect x="75.4" y="7.4" width="3.4" height="3.4" fill="#8c8c8c" transform="rotate(225 77.1 15.3)"/>
<rect x="75.4" y="7.4" width="3.4" height="3.4" fill="#8c8c8c" transform="rotate(270 77.1 15.3)"/>
<rect x="75.4" y="7.4" width="3.4" height="3.4" fill="#8c8c8c" transform="rotate(315 77.1 15.3)"/>
<rect x="121.7" y="9.6" width="2.4" height="11.6" rx="0.7" fill="#f5b13d"/>
<rect x="134.8" y="9.6" width="2.4" height="11.6" rx="0.7" fill="#f5b13d"/>
<rect x="125" y="10.5" width="8.9" height="9.8" fill="#f5b13d"/>
<rect x="125.2" y="9.5" width="1.5" height="11.8" rx="0.4" fill="#f5b13d"/>
<rect x="127.5" y="9.5" width="1.5" height="11.8" rx="0.4" fill="#f5b13d"/>
<rect x="129.9" y="9.5" width="1.5" height="11.8" rx="0.4" fill="#f5b13d"/>
<rect x="132.2" y="9.5" width="1.5" height="11.8" rx="0.4" fill="#f5b13d"/>
<path d="M225.6 21.8L233.3 8L233.3 22Z" fill="#fff"/><path d="M235.2 8L243 21.8L235.2 22Z" fill="#8c8c8c"/>
<circle cx="506.3" cy="9.2" r="1.7" fill="#8e8e93"/>
<circle cx="511.9" cy="9.2" r="1.7" fill="#8e8e93"/>
<circle cx="517.6" cy="9.2" r="1.7" fill="#8e8e93"/>
<rect x="886.8" y="8" width="14.6" height="14.4" rx="2" fill="#222" stroke="#b9b9bd" stroke-width="1.1"/>
<path d="M888.6 19.8L892.4 13.8L894 15.8L896.4 11.4L900.4 19.8Z" fill="#f5b13d"/><rect x="897.6" y="10.6" width="1.8" height="1.8" fill="#e09a2a"/>
<g transform="translate(946.9 15.8) rotate(45) scale(0.95 1)"><rect x="-2.6" y="-10" width="5.2" height="4.6" rx="2" fill="#8c8c8c"/><rect x="-4" y="-6" width="8" height="2.2" rx="0.8" fill="#8c8c8c"/><path d="M-2.4 -3.8L2.4 -3.8L2.4 4L0 9.4L-2.4 4Z" fill="#f2f2f2"/></g>
<circle cx="999.3" cy="15" r="7.3" fill="#9a6450" stroke="#d8cfc8" stroke-width="0.9"/>
<g transform="translate(15.8 48.6) rotate(-47)"><rect x="-7" y="-2.3" width="12.8" height="4.6" fill="#f5a623"/><rect x="-6.2" y="-2.3" width="1.4" height="4.6" fill="#fff"/><path d="M-7.6 -2.3L-7.6 2.3L-10.8 0.6L-10.8 -0.6Z" fill="#f5a623"/><path d="M5.8 -2.3L7 -2.3A2.3 2.3 0 0 1 7 2.3L5.8 2.3Z" fill="#fff"/></g>
<g transform="translate(15.6 89.8) rotate(-37)"><path d="M-1.6 -5.8L3.2 -5.8A5.8 5.8 0 0 1 3.2 5.8L-1.6 5.8Z" fill="#8c8c8c"/><path d="M-1.6 -5.8L-3.2 -5.8A5.8 5.8 0 0 0 -3.2 5.8L-1.6 5.8Z" fill="#fff"/></g>
<g transform="translate(16.6 130.6) rotate(-42)"><rect x="-5.4" y="-5.4" width="10.8" height="10.8" fill="#fff"/><path d="M-3.8 -3.6A4.2 4.2 0 0 0 4.2 -2.6" fill="none" stroke="#131315" stroke-width="1.3"/></g>
<path d="M8.6 132.2C10.6 134.6 10.4 137 8.6 137C6.8 137 6.6 134.6 8.6 132.2Z" fill="#f5a623"/>
<circle cx="15.6" cy="172.6" r="7" fill="none" stroke="#fff" stroke-width="1.2" stroke-dasharray="1.3 1.45"/>
<circle cx="13.2" cy="175" r="3.1" fill="#fff"/><path d="M14 174.2L19 169.4" stroke="#fff" stroke-width="1.3"/><path d="M16.6 168.8L20 168.6L19.6 172Z" fill="#fff"/>
<rect x="9.4" y="207.4" width="12.4" height="12.6" fill="none" stroke="#fff" stroke-width="1.1" stroke-dasharray="1.2 1.05"/>
<path d="M8.8 254.6L14.8 250L14.8 252.8C19.4 252.8 22.2 255.6 22.4 260.6C20.6 257.8 18.4 256.6 14.8 256.6L14.8 259.4Z" fill="#fff"/>
<path d="M8.8 254.6L14.8 250L14.8 252.8C19.4 252.8 22.2 255.6 22.4 260.6C20.6 257.8 18.4 256.6 14.8 256.6L14.8 259.4Z" fill="#fff" transform="translate(31.2 40.8) scale(-1 1)"/>
<path d="M8.6 522.4L19.6 527.9L8.6 533.4Z" fill="#fff"/>
<rect x="7.8" y="565.4" width="7" height="7" rx="0.8" fill="#fff"/><path d="M16.4 568.9L22.4 568.9M19.4 565.9L19.4 571.9" stroke="#fff" stroke-width="1.2"/>
<rect x="11" y="606" width="1.8" height="9" fill="#fff"/><path d="M20.2 606L20.2 615L13 610.5Z" fill="#fff"/>
<rect x="18.4" y="647.2" width="1.8" height="9" fill="#fff"/><path d="M11 647.2L11 656.2L18.2 651.7Z" fill="#fff"/>
<rect x="8.8" y="688.6" width="1.5" height="7.8" fill="#fff"/><path d="M15.8 688.6L15.8 696.4L10.4 692.5Z" fill="#fff"/><path d="M21.4 688.6L21.4 696.4L16 692.5Z" fill="#fff"/>
<rect x="19.9" y="729.8" width="1.5" height="7.8" fill="#fff"/><path d="M8.8 729.8L8.8 737.6L14.2 733.7Z" fill="#fff"/><path d="M14.4 729.8L14.4 737.6L19.8 733.7Z" fill="#fff"/>
<rect x="38.8" y="290.4" width="35.6" height="84" rx="12" fill="#17171c"/>
<circle cx="56.4" cy="328.4" r="0.9" fill="#e09a2a"/>
<circle cx="56.4" cy="352" r="14.8" fill="#3f3f47" stroke="#d8922a" stroke-width="1.4"/>
<rect x="33.8" y="638" width="180" height="3.6" rx="1" fill="#6c6c82"/>
<rect x="216" y="635" width="808" height="96" fill="#0f0f12"/>
<rect x="219" y="635.5" width="805" height="29" fill="#18181c"/>
<rect x="219" y="666" width="789.7" height="65" fill="#17171b"/>
<rect x="225.4" y="666" width="22.4" height="65" fill="#1b1b20"/>
<rect x="270.2" y="666" width="22.4" height="65" fill="#1b1b20"/>
<rect x="314.9" y="666" width="22.4" height="65" fill="#1b1b20"/>
<rect x="359.7" y="666" width="22.4" height="65" fill="#1b1b20"/>
<rect x="404.4" y="666" width="22.4" height="65" fill="#1b1b20"/>
<rect x="449.2" y="666" width="22.4" height="65" fill="#1b1b20"/>
<rect x="494" y="666" width="22.4" height="65" fill="#1b1b20"/>
<rect x="538.7" y="666" width="22.4" height="65" fill="#1b1b20"/>
<rect x="583.5" y="666" width="22.4" height="65" fill="#1b1b20"/>
<rect x="628.2" y="666" width="22.4" height="65" fill="#1b1b20"/>
<rect x="673" y="666" width="22.4" height="65" fill="#1b1b20"/>
<rect x="717.8" y="666" width="22.4" height="65" fill="#1b1b20"/>
<rect x="762.5" y="666" width="22.4" height="65" fill="#1b1b20"/>
<rect x="807.3" y="666" width="22.4" height="65" fill="#1b1b20"/>
<rect x="852" y="666" width="22.4" height="65" fill="#1b1b20"/>
<rect x="896.8" y="666" width="22.4" height="65" fill="#1b1b20"/>
<rect x="941.6" y="666" width="22.4" height="65" fill="#1b1b20"/>
<rect x="986.3" y="666" width="22.4" height="65" fill="#1b1b20"/>
<path d="M225.4 636L225.4 654.5" stroke="#5a5a60" stroke-width="1"/>
<path d="M247.8 636L247.8 641" stroke="#5a5a60" stroke-width="1"/>
<path d="M270.2 636L270.2 645" stroke="#5a5a60" stroke-width="1"/>
<path d="M292.5 636L292.5 641" stroke="#5a5a60" stroke-width="1"/>
<path d="M314.9 636L314.9 645" stroke="#5a5a60" stroke-width="1"/>
<path d="M337.3 636L337.3 641" stroke="#5a5a60" stroke-width="1"/>
<path d="M359.7 636L359.7 645" stroke="#5a5a60" stroke-width="1"/>
<path d="M382.1 636L382.1 641" stroke="#5a5a60" stroke-width="1"/>
<path d="M404.4 636L404.4 645" stroke="#5a5a60" stroke-width="1"/>
<path d="M426.8 636L426.8 641" stroke="#5a5a60" stroke-width="1"/>
<path d="M449.2 636L449.2 645" stroke="#5a5a60" stroke-width="1"/>
<path d="M471.6 636L471.6 641" stroke="#5a5a60" stroke-width="1"/>
<path d="M494 636L494 654.5" stroke="#5a5a60" stroke-width="1"/>
<path d="M516.3 636L516.3 641" stroke="#5a5a60" stroke-width="1"/>
<path d="M538.7 636L538.7 645" stroke="#5a5a60" stroke-width="1"/>
<path d="M561.1 636L561.1 641" stroke="#5a5a60" stroke-width="1"/>
<path d="M583.5 636L583.5 645" stroke="#5a5a60" stroke-width="1"/>
<path d="M605.9 636L605.9 641" stroke="#5a5a60" stroke-width="1"/>
<path d="M628.2 636L628.2 645" stroke="#5a5a60" stroke-width="1"/>
<path d="M650.6 636L650.6 641" stroke="#5a5a60" stroke-width="1"/>
<path d="M673 636L673 645" stroke="#5a5a60" stroke-width="1"/>
<path d="M695.4 636L695.4 641" stroke="#5a5a60" stroke-width="1"/>
<path d="M717.8 636L717.8 645" stroke="#5a5a60" stroke-width="1"/>
<path d="M740.1 636L740.1 641" stroke="#5a5a60" stroke-width="1"/>
<path d="M762.5 636L762.5 654.5" stroke="#5a5a60" stroke-width="1"/>
<path d="M784.9 636L784.9 641" stroke="#5a5a60" stroke-width="1"/>
<path d="M807.3 636L807.3 645" stroke="#5a5a60" stroke-width="1"/>
<path d="M829.7 636L829.7 641" stroke="#5a5a60" stroke-width="1"/>
<path d="M852 636L852 645" stroke="#5a5a60" stroke-width="1"/>
<path d="M874.4 636L874.4 641" stroke="#5a5a60" stroke-width="1"/>
<path d="M896.8 636L896.8 645" stroke="#5a5a60" stroke-width="1"/>
<path d="M919.2 636L919.2 641" stroke="#5a5a60" stroke-width="1"/>
<path d="M941.6 636L941.6 645" stroke="#5a5a60" stroke-width="1"/>
<path d="M963.9 636L963.9 641" stroke="#5a5a60" stroke-width="1"/>
<path d="M986.3 636L986.3 645" stroke="#5a5a60" stroke-width="1"/>
<path d="M1008.7 636L1008.7 641" stroke="#5a5a60" stroke-width="1"/>
<path d="M494 664L494 731" stroke="#34343a" stroke-width="1"/>
<path d="M762.5 664L762.5 731" stroke="#34343a" stroke-width="1"/>
<rect x="226" y="632.4" width="21.6" height="3.2" rx="1.6" fill="#19d67a"/>
<rect x="987.2" y="632.4" width="21.4" height="3.2" rx="1.6" fill="#e0484f"/>
<rect x="227" y="671.8" width="331.7" height="25" rx="2.5" fill="#737373" stroke="#c4c4c4" stroke-width="1.1"/>
<rect x="231" y="673.8" width="11" height="21" rx="2" fill="#bcbcbc" stroke="#dedede" stroke-width="0.9"/>
<text x="236.7" y="693.5" font-size="7.4" fill="#262626" text-anchor="middle">3</text>
<rect x="253.4" y="673.8" width="11" height="21" rx="2" fill="#bcbcbc" stroke="#dedede" stroke-width="0.9"/>
<text x="259.1" y="693.5" font-size="7.4" fill="#262626" text-anchor="middle">3</text>
<rect x="275.8" y="673.8" width="11" height="21" rx="2" fill="#bcbcbc" stroke="#dedede" stroke-width="0.9"/>
<text x="281.5" y="693.5" font-size="7.4" fill="#262626" text-anchor="middle">3</text>
<rect x="298.1" y="673.8" width="11" height="21" rx="2" fill="#bcbcbc" stroke="#dedede" stroke-width="0.9"/>
<text x="303.8" y="693.5" font-size="7.4" fill="#262626" text-anchor="middle">3</text>
<rect x="320.5" y="673.8" width="11" height="21" rx="2" fill="#bcbcbc" stroke="#dedede" stroke-width="0.9"/>
<text x="326.2" y="693.5" font-size="7.4" fill="#262626" text-anchor="middle">3</text>
<rect x="342.9" y="673.8" width="11" height="21" rx="2" fill="#bcbcbc" stroke="#dedede" stroke-width="0.9"/>
<text x="348.6" y="693.5" font-size="7.4" fill="#262626" text-anchor="middle">3</text>
<rect x="365.3" y="673.8" width="11" height="21" rx="2" fill="#bcbcbc" stroke="#dedede" stroke-width="0.9"/>
<text x="371" y="693.5" font-size="7.4" fill="#262626" text-anchor="middle">3</text>
<path d="M381.3 676.8L381.3 691.8" stroke="#d0d0d0" stroke-width="1.2"/>
<rect x="387.7" y="673.8" width="11" height="21" rx="2" fill="#2b2b2b"/>
<text x="393.4" y="693.5" font-size="7.4" fill="#111" text-anchor="middle">3</text>
<rect x="410" y="673.8" width="11" height="21" rx="2" fill="#2b2b2b"/>
<text x="415.7" y="693.5" font-size="7.4" fill="#111" text-anchor="middle">3</text>
<rect x="432.4" y="673.8" width="11" height="21" rx="2" fill="#2b2b2b"/>
<text x="438.1" y="693.5" font-size="7.4" fill="#111" text-anchor="middle">3</text>
<rect x="454.8" y="673.8" width="11" height="21" rx="2" fill="#2b2b2b"/>
<text x="460.5" y="693.5" font-size="7.4" fill="#111" text-anchor="middle">3</text>
<rect x="477.2" y="673.8" width="11" height="21" rx="2" fill="#2b2b2b"/>
<text x="482.9" y="693.5" font-size="7.4" fill="#111" text-anchor="middle">3</text>
<rect x="499.6" y="673.8" width="11" height="21" rx="2" fill="#2b2b2b"/>
<text x="505.3" y="693.5" font-size="7.4" fill="#111" text-anchor="middle">3</text>
<rect x="521.9" y="673.8" width="11" height="21" rx="2" fill="#2b2b2b"/>
<text x="527.6" y="693.5" font-size="7.4" fill="#111" text-anchor="middle">3</text>
<rect x="544.3" y="673.8" width="11" height="21" rx="2" fill="#2b2b2b"/>
<text x="550" y="693.5" font-size="7.4" fill="#111" text-anchor="middle">3</text>
<path d="M538.2 676.8L538.2 691.8" stroke="#d0d0d0" stroke-width="1.2"/>
<rect x="563.7" y="672.3" width="17.4" height="24" rx="1.5" fill="#bcbcbc"/>
<text x="572.4" y="693.4" font-size="7.5" font-weight="bold" fill="#2a2a2a" text-anchor="middle">...</text>
<rect x="586.1" y="672.3" width="17.4" height="24" rx="1.5" fill="#bcbcbc"/>
<text x="594.8" y="693.4" font-size="7.5" font-weight="bold" fill="#2a2a2a" text-anchor="middle">...</text>
<rect x="608.5" y="672.3" width="17.4" height="24" rx="1.5" fill="#bcbcbc"/>
<text x="617.2" y="693.4" font-size="7.5" font-weight="bold" fill="#2a2a2a" text-anchor="middle">...</text>
<rect x="630.8" y="672.3" width="17.4" height="24" rx="1.5" fill="#bcbcbc"/>
<rect x="653.2" y="672.3" width="17.4" height="24" rx="1.5" fill="#bcbcbc"/>
<rect x="675.6" y="672.3" width="17.4" height="24" rx="1.5" fill="#bcbcbc"/>
<rect x="697.6" y="671.8" width="242.1" height="25" rx="2.5" fill="#737373" stroke="#c4c4c4" stroke-width="1.1"/>
<rect x="701" y="673.8" width="11" height="21" rx="2" fill="#bcbcbc" stroke="#dedede" stroke-width="0.9"/>
<text x="706.7" y="693.5" font-size="7.4" fill="#262626" text-anchor="middle">3</text>
<rect x="723.4" y="673.8" width="11" height="21" rx="2" fill="#bcbcbc" stroke="#dedede" stroke-width="0.9"/>
<text x="729.1" y="693.5" font-size="7.4" fill="#262626" text-anchor="middle">3</text>
<rect x="745.7" y="673.8" width="11" height="21" rx="2" fill="#bcbcbc" stroke="#dedede" stroke-width="0.9"/>
<text x="751.4" y="693.5" font-size="7.4" fill="#262626" text-anchor="middle">3</text>
<rect x="768.1" y="673.8" width="11" height="21" rx="2" fill="#bcbcbc" stroke="#dedede" stroke-width="0.9"/>
<text x="773.8" y="693.5" font-size="7.4" fill="#262626" text-anchor="middle">3</text>
<rect x="790.5" y="673.8" width="11" height="21" rx="2" fill="#bcbcbc" stroke="#dedede" stroke-width="0.9"/>
<rect x="812.9" y="673.8" width="11" height="21" rx="2" fill="#bcbcbc" stroke="#dedede" stroke-width="0.9"/>
<rect x="835.3" y="673.8" width="11" height="21" rx="2" fill="#bcbcbc" stroke="#dedede" stroke-width="0.9"/>
<path d="M852.1 676.8L852.1 691.8" stroke="#d0d0d0" stroke-width="1.2"/>
<rect x="857.6" y="673.8" width="11" height="21" rx="2" fill="#2b2b2b"/>
<text x="863.3" y="693.5" font-size="7.4" fill="#111" text-anchor="middle">3</text>
<rect x="880" y="673.8" width="11" height="21" rx="2" fill="#2b2b2b"/>
<text x="885.7" y="693.5" font-size="7.4" fill="#111" text-anchor="middle">3</text>
<rect x="902.4" y="673.8" width="11" height="21" rx="2" fill="#2b2b2b"/>
<text x="908.1" y="693.5" font-size="7.4" fill="#111" text-anchor="middle">3</text>
<rect x="924.8" y="673.8" width="11" height="21" rx="2" fill="#2b2b2b"/>
<text x="930.5" y="693.5" font-size="7.4" fill="#111" text-anchor="middle">3</text>
<rect x="944.2" y="672.3" width="17.4" height="24" rx="1.5" fill="#bcbcbc"/>
<text x="952.9" y="693.4" font-size="7.5" font-weight="bold" fill="#2a2a2a" text-anchor="middle">...</text>
<rect x="966.5" y="672.3" width="17.4" height="24" rx="1.5" fill="#bcbcbc"/>
<text x="975.2" y="693.4" font-size="7.5" font-weight="bold" fill="#2a2a2a" text-anchor="middle">...</text>
<rect x="988.9" y="672.3" width="17.4" height="24" rx="1.5" fill="#bcbcbc"/>
<text x="997.6" y="693.4" font-size="7.5" font-weight="bold" fill="#2a2a2a" text-anchor="middle">...</text>
<rect x="227" y="704.6" width="779.5" height="25" rx="2.5" fill="#737373" stroke="#c4c4c4" stroke-width="1.1"/>
<rect x="231" y="706.6" width="11" height="21" rx="2" fill="#bcbcbc" stroke="#dedede" stroke-width="0.9"/>
<text x="236.7" y="726.3" font-size="7.4" fill="#262626" text-anchor="middle">3</text>
<rect x="253.4" y="706.6" width="11" height="21" rx="2" fill="#bcbcbc" stroke="#dedede" stroke-width="0.9"/>
<text x="259.1" y="726.3" font-size="7.4" fill="#262626" text-anchor="middle">3</text>
<rect x="275.8" y="706.6" width="11" height="21" rx="2" fill="#bcbcbc" stroke="#dedede" stroke-width="0.9"/>
<text x="281.5" y="726.3" font-size="7.4" fill="#262626" text-anchor="middle">3</text>
<rect x="298.1" y="706.6" width="11" height="21" rx="2" fill="#bcbcbc" stroke="#dedede" stroke-width="0.9"/>
<text x="303.8" y="726.3" font-size="7.4" fill="#262626" text-anchor="middle">3</text>
<rect x="320.5" y="706.6" width="11" height="21" rx="2" fill="#bcbcbc" stroke="#dedede" stroke-width="0.9"/>
<text x="326.2" y="726.3" font-size="7.4" fill="#262626" text-anchor="middle">3</text>
<rect x="342.9" y="706.6" width="11" height="21" rx="2" fill="#bcbcbc" stroke="#dedede" stroke-width="0.9"/>
<text x="348.6" y="726.3" font-size="7.4" fill="#262626" text-anchor="middle">3</text>
<rect x="365.3" y="706.6" width="11" height="21" rx="2" fill="#bcbcbc" stroke="#dedede" stroke-width="0.9"/>
<text x="371" y="726.3" font-size="7.4" fill="#262626" text-anchor="middle">3</text>
<path d="M381.3 709.6L381.3 724.6" stroke="#d0d0d0" stroke-width="1.2"/>
<rect x="387.7" y="706.6" width="11" height="21" rx="2" fill="#2b2b2b"/>
<text x="393.4" y="726.3" font-size="7.4" fill="#111" text-anchor="middle">3</text>
<rect x="410" y="706.6" width="11" height="21" rx="2" fill="#2b2b2b"/>
<text x="415.7" y="726.3" font-size="7.4" fill="#111" text-anchor="middle">3</text>
<rect x="432.4" y="706.6" width="11" height="21" rx="2" fill="#2b2b2b"/>
<text x="438.1" y="726.3" font-size="7.4" fill="#111" text-anchor="middle">3</text>
<rect x="454.8" y="706.6" width="11" height="21" rx="2" fill="#2b2b2b"/>
<text x="460.5" y="726.3" font-size="7.4" fill="#111" text-anchor="middle">3</text>
<rect x="477.2" y="706.6" width="11" height="21" rx="2" fill="#2b2b2b"/>
<text x="482.9" y="726.3" font-size="7.4" fill="#111" text-anchor="middle">3</text>
<rect x="499.6" y="706.6" width="11" height="21" rx="2" fill="#2b2b2b"/>
<text x="505.3" y="726.3" font-size="7.4" fill="#111" text-anchor="middle">3</text>
<rect x="521.9" y="706.6" width="11" height="21" rx="2" fill="#2b2b2b"/>
<text x="527.6" y="726.3" font-size="7.4" fill="#111" text-anchor="middle">3</text>
<rect x="544.3" y="706.6" width="11" height="21" rx="2" fill="#2b2b2b"/>
<text x="550" y="726.3" font-size="7.4" fill="#111" text-anchor="middle">3</text>
<rect x="566.7" y="706.6" width="11" height="21" rx="2" fill="#2b2b2b"/>
<text x="572.4" y="726.3" font-size="7.4" fill="#111" text-anchor="middle">3</text>
<rect x="589.1" y="706.6" width="11" height="21" rx="2" fill="#2b2b2b"/>
<text x="594.8" y="726.3" font-size="7.4" fill="#111" text-anchor="middle">3</text>
<rect x="611.5" y="706.6" width="11" height="21" rx="2" fill="#2b2b2b"/>
<text x="617.2" y="726.3" font-size="7.4" fill="#111" text-anchor="middle">3</text>
<rect x="633.8" y="706.6" width="11" height="21" rx="2" fill="#2b2b2b"/>
<text x="639.5" y="726.3" font-size="7.4" fill="#111" text-anchor="middle">3</text>
<rect x="656.2" y="706.6" width="11" height="21" rx="2" fill="#2b2b2b"/>
<text x="661.9" y="726.3" font-size="7.4" fill="#111" text-anchor="middle">3</text>
<rect x="678.6" y="706.6" width="11" height="21" rx="2" fill="#2b2b2b"/>
<text x="684.3" y="726.3" font-size="7.4" fill="#111" text-anchor="middle">3</text>
<rect x="701" y="706.6" width="11" height="21" rx="2" fill="#2b2b2b"/>
<text x="706.7" y="726.3" font-size="7.4" fill="#111" text-anchor="middle">3</text>
<rect x="723.4" y="706.6" width="11" height="21" rx="2" fill="#2b2b2b"/>
<text x="729.1" y="726.3" font-size="7.4" fill="#111" text-anchor="middle">3</text>
<rect x="745.7" y="706.6" width="11" height="21" rx="2" fill="#2b2b2b"/>
<text x="751.4" y="726.3" font-size="7.4" fill="#111" text-anchor="middle">3</text>
<rect x="768.1" y="706.6" width="11" height="21" rx="2" fill="#2b2b2b"/>
<text x="773.8" y="726.3" font-size="7.4" fill="#111" text-anchor="middle">3</text>
<rect x="790.5" y="706.6" width="11" height="21" rx="2" fill="#2b2b2b"/>
<text x="796.2" y="726.3" font-size="7.4" fill="#111" text-anchor="middle">3</text>
<rect x="812.9" y="706.6" width="11" height="21" rx="2" fill="#2b2b2b"/>
<text x="818.6" y="726.3" font-size="7.4" fill="#111" text-anchor="middle">3</text>
<rect x="835.3" y="706.6" width="11" height="21" rx="2" fill="#2b2b2b"/>
<text x="841" y="726.3" font-size="7.4" fill="#111" text-anchor="middle">3</text>
<rect x="857.6" y="706.6" width="11" height="21" rx="2" fill="#2b2b2b"/>
<text x="863.3" y="726.3" font-size="7.4" fill="#111" text-anchor="middle">3</text>
<rect x="880" y="706.6" width="11" height="21" rx="2" fill="#2b2b2b"/>
<text x="885.7" y="726.3" font-size="7.4" fill="#111" text-anchor="middle">3</text>
<rect x="902.4" y="706.6" width="11" height="21" rx="2" fill="#2b2b2b"/>
<text x="908.1" y="726.3" font-size="7.4" fill="#111" text-anchor="middle">3</text>
<rect x="924.8" y="706.6" width="11" height="21" rx="2" fill="#2b2b2b"/>
<text x="930.5" y="726.3" font-size="7.4" fill="#111" text-anchor="middle">3</text>
<rect x="947.2" y="706.6" width="11" height="21" rx="2" fill="#2b2b2b"/>
<text x="952.9" y="726.3" font-size="7.4" fill="#111" text-anchor="middle">3</text>
<rect x="969.5" y="706.6" width="11" height="21" rx="2" fill="#2b2b2b"/>
<text x="975.2" y="726.3" font-size="7.4" fill="#111" text-anchor="middle">3</text>
<rect x="991.9" y="706.6" width="11" height="21" rx="2" fill="#2b2b2b"/>
<text x="997.6" y="726.3" font-size="7.4" fill="#111" text-anchor="middle">3</text>
<path d="M538.2 709.6L538.2 724.6" stroke="#d0d0d0" stroke-width="1.2"/>
<path d="M694.6 709.6L694.6 724.6" stroke="#d0d0d0" stroke-width="1.2"/>
<path d="M852.1 709.6L852.1 724.6" stroke="#d0d0d0" stroke-width="1.2"/>
<rect x="225.4" y="665.5" width="22.4" height="65.5" fill="#1fae72" opacity="0.32"/>
<path d="M225.4 665.5L225.4 731" stroke="#1e9a66" stroke-width="1"/>
<rect x="918.2" y="665.5" width="22.4" height="65.5" fill="#c98a2c" opacity="0.36"/>
<rect x="986.3" y="665.5" width="22.4" height="65.5" fill="#b04450" opacity="0.24"/>
<text x="228.6" y="653.6" font-size="8" fill="#19c670">0</text>
<text x="497" y="653.6" font-size="8" fill="#c4c4c8">12</text>
<text x="765.4" y="653.6" font-size="8" fill="#c4c4c8">24</text>
<text x="922.6" y="654" font-size="9" fill="#e09a2a" font-weight="bold">31</text>
<rect x="921" y="657" width="19.4" height="3" rx="1.5" fill="#e09a2a"/>
<text x="989.6" y="653.6" font-size="8" fill="#e0484f">34</text>
<circle cx="41.4" cy="651.3" r="1.9" fill="#f5a623"/><rect x="45.4" y="649.4" width="6" height="3.8" rx="1.9" fill="#f5a623"/>
<g stroke="#e8e8e8" stroke-width="0.9" fill="none"><path d="M86.2 644.2L86.2 647.6M84.5 645.9L87.9 645.9"/><path d="M82.4 651.8C82.8 648 89.6 648 90 651.8Z"/><rect x="81" y="652.7" width="10.4" height="2.2" rx="1.1"/><rect x="81" y="655.5" width="10.4" height="2.2" rx="1.1"/></g>
<rect x="103.6" y="646" width="9.6" height="11" rx="1.2" fill="#f2f2f2"/><rect x="106.4" y="644.6" width="4" height="2.6" rx="0.8" fill="#f2f2f2"/><rect x="106.4" y="648.8" width="8" height="9.4" rx="0.8" fill="#e6e6e6" stroke="#9a9a9a" stroke-width="0.7"/><path d="M108 651.4L113 651.4M108 653.4L113 653.4M108 655.4L113 655.4" stroke="#8a8a8a" stroke-width="0.7"/>
<path d="M125.6 646L129.4 646L129.4 650L133 650L133 646L136.8 646L136.8 655.4A1.2 1.2 0 0 1 135.6 656.6L126.8 656.6A1.2 1.2 0 0 1 125.6 655.4Z" fill="#f2f2f2"/><path d="M131.2 646.6L131.2 652.4M128.6 650.4L131.2 653.2L133.8 650.4" stroke="#16161a" stroke-width="1.5" fill="none"/>
<rect x="146.4" y="646.2" width="15" height="10.4" fill="none" stroke="#e8e8e8" stroke-width="0.9" stroke-dasharray="2.2 1.4"/><rect x="148" y="648.6" width="11.8" height="5.6" rx="1" fill="#f5b13d"/>
<path d="M173.8 647.4L173.8 654.6L175.6 653.1L177 656L178.2 655.5L176.8 652.6L179.2 652.4Z" fill="#f2f2f2"/>
<rect x="553.8" y="738.4" width="6.6" height="7" rx="0.8" fill="#f0a92e"/><path d="M556 740L558.2 741.9L556 743.8" stroke="#16161a" stroke-width="1.2" fill="none"/>
<rect x="561.4" y="738.4" width="6.6" height="7" rx="0.8" fill="#f0a92e"/><path d="M563.6 740L565.8 741.9L563.6 743.8" stroke="#16161a" stroke-width="1.2" fill="none"/>
<rect x="576.6" y="738.4" width="6.6" height="7" rx="0.8" fill="#ececec"/><path d="M578.8 740L581 741.9L578.8 743.8" stroke="#16161a" stroke-width="1.2" fill="none"/>
<rect x="584.6" y="738.4" width="6" height="7" rx="0.8" fill="#ececec"/><rect x="586.4" y="739.8" width="2.4" height="4.2" fill="#555"/>
<path d="M606 738.8A3.4 3.4 0 1 0 606 745.2" stroke="#ececec" stroke-width="2" fill="none"/><rect x="606.6" y="738" width="2" height="2.2" fill="#ececec"/><rect x="606.6" y="743.8" width="2" height="2.2" fill="#ececec"/>
<path d="M621.3 736.4L621.3 747.4" stroke="#4a4a4e" stroke-width="1"/>
<path d="M628.4 737.6L628.4 746.2" stroke="#cfcfcf" stroke-width="1.1"/>
<rect x="630.4" y="739.6" width="3.8" height="4.6" fill="#cfcfcf"/>
<rect x="635" y="739.6" width="3.8" height="4.6" fill="#cfcfcf"/>
<rect x="639.6" y="739.6" width="3.8" height="4.6" fill="#cfcfcf"/>
<rect x="651.8" y="739.6" width="3.6" height="4.6" fill="#cfcfcf"/>
<rect x="656.2" y="739.6" width="3.6" height="4.6" fill="#cfcfcf"/>
<circle cx="661" cy="742.6" r="2.8" fill="#16161a" stroke="#ececec" stroke-width="1.2"/><path d="M663 744.8L665.4 747.4" stroke="#ececec" stroke-width="1.4"/>
<path d="M673.4 737.6L673.4 746.2M688.4 737.6L688.4 746.2" stroke="#bdbdbd" stroke-width="1"/>
<rect x="675" y="739.6" width="1.2" height="4.6" fill="#a8a8a8"/>
<rect x="676.9" y="739.6" width="1.2" height="4.6" fill="#a8a8a8"/>
<rect x="678.8" y="739.6" width="1.2" height="4.6" fill="#a8a8a8"/>
<rect x="680.7" y="739.6" width="1.2" height="4.6" fill="#a8a8a8"/>
<rect x="682.6" y="739.6" width="1.2" height="4.6" fill="#a8a8a8"/>
<rect x="684.5" y="739.6" width="1.2" height="4.6" fill="#a8a8a8"/>
<rect x="686.4" y="739.6" width="1.2" height="4.6" fill="#a8a8a8"/>
<rect x="449.6" y="730.4" width="3.4" height="22" fill="#5a35e0"/>
<path d="M39.6 606.6L44.8 612L50 606.6" stroke="#fff" stroke-width="1.5" fill="none"/>
<rect x="69.4" y="602.6" width="23.2" height="14" rx="7" fill="#d8922a"/><circle cx="85.4" cy="609.6" r="6" fill="#fff"/>
<circle cx="197.4" cy="609.6" r="1.35" fill="#fff"/>
<circle cx="202.1" cy="609.6" r="1.35" fill="#fff"/>
<circle cx="206.8" cy="609.6" r="1.35" fill="#fff"/>
</svg>
<div class="abs" style="left:199.5px;top:664.6px;width:14.6px;height:2.2px;background:#ececec;border-radius:0 0 3px 3px"></div>
<div class="lay" style="top:669px;height:31px"><div class="th"></div>
<div class="t" style="left:17px;top:2.6px;font-weight:bold;font-size:8.5px;color:#d6d6da">N</div>
<div class="t" style="left:11.6px;top:13.6px;font-size:8.8px">Base tete</div>
<div class="oc" style="left:71.2px;top:6.2px">100%</div>
<svg class="abs" style="left:-33px;top:0" width="220" height="32" viewBox="0 669 220 32"><g transform="translate(42 677.4) rotate(-45)"><rect x="-3.4" y="-1.3" width="6.4" height="2.6" fill="#f2f2f2"/><path d="M-3.9 -1.3L-3.9 1.3L-5.6 0Z" fill="#f2f2f2"/></g>
<path d="M129.8 684.7C133.6 678.5 141.6 678.5 145.4 684.7C141.6 690.7 133.6 690.7 129.8 684.7Z" fill="#f4f4f4"/>
<circle cx="137.6" cy="684.7" r="3.5" fill="#1b1b2a" stroke="#f0a020" stroke-width="1.5"/>
<circle cx="138.8" cy="683.4" r="1.6" fill="#fff"/>
<ellipse cx="161.8" cy="684.7" rx="7.3" ry="6.3" fill="none" stroke="#f6f6f6" stroke-width="1.6"/>
<ellipse cx="160.8" cy="686.2" rx="4.7" ry="4.2" fill="none" stroke="#f6f6f6" stroke-width="1.5"/>
<circle cx="160.2" cy="687.9" r="2.4" fill="#f6f6f6"/>
<rect x="185" y="680.2" width="1.7" height="1.7" fill="#e6e6e6"/>
<rect x="185" y="683.9" width="1.7" height="1.7" fill="#e6e6e6"/>
<rect x="185" y="687.5" width="1.7" height="1.7" fill="#e6e6e6"/></svg>
</div>
<div class="lay" style="top:702px;height:29px;border-radius:4px 4px 0 0"><div class="th"></div>
<div class="t" style="left:17px;top:2.6px;font-weight:bold;font-size:8.5px;color:#d6d6da">N</div>
<div class="t" style="left:11.6px;top:13.6px;font-size:8.8px">Clean corps</div>
<div class="oc" style="left:71.2px;top:6.2px">100%</div>
<svg class="abs" style="left:-33px;top:0" width="220" height="32" viewBox="0 702 220 32"><g transform="translate(42 710.4) rotate(-45)"><rect x="-3.4" y="-1.3" width="6.4" height="2.6" fill="#f2f2f2"/><path d="M-3.9 -1.3L-3.9 1.3L-5.6 0Z" fill="#f2f2f2"/></g>
<path d="M129.8 717.7C133.6 711.5 141.6 711.5 145.4 717.7C141.6 723.7 133.6 723.7 129.8 717.7Z" fill="#f4f4f4"/>
<circle cx="137.6" cy="717.7" r="3.5" fill="#1b1b2a" stroke="#f0a020" stroke-width="1.5"/>
<circle cx="138.8" cy="716.4" r="1.6" fill="#fff"/>
<ellipse cx="161.8" cy="717.7" rx="7.3" ry="6.3" fill="none" stroke="#f6f6f6" stroke-width="1.6"/>
<ellipse cx="160.8" cy="719.2" rx="4.7" ry="4.2" fill="none" stroke="#f6f6f6" stroke-width="1.5"/>
<circle cx="160.2" cy="720.9" r="2.4" fill="#f6f6f6"/>
<rect x="185" y="713.2" width="1.7" height="1.7" fill="#e6e6e6"/>
<rect x="185" y="716.9" width="1.7" height="1.7" fill="#e6e6e6"/>
<rect x="185" y="720.5" width="1.7" height="1.7" fill="#e6e6e6"/></svg>
</div>
<div class="t" style="left:98.4px;top:603.6px;color:#d2d2d6">Onion Skin</div>
<div class="t" style="left:60.6px;top:644.4px;font-size:10.6px;line-height:14px;color:#d0d0d4">31</div>
<div class="t" style="left:41.2px;top:735.8px;color:#c9c9cd">Shot: 35 frames (4.38sec) | 910 sheets</div>
<div class="t" style="left:457.6px;top:735.8px;color:#4d36cc">Linked sheet</div>
<div class="t" style="left:38.8px;top:307.6px;width:35.6px;text-align:center;color:#d2d2d6">10px</div>
<div class="t" style="left:38.8px;top:346px;width:35.6px;text-align:center;color:#d2d2d6">100%</div>
<div class="t" style="left:176.7px;top:9.6px;width:10px;text-align:center;font-size:9px;color:#c8892b">8</div>
<div class="abs" style="left:0;top:596px;width:1024px;height:28px">
<div class="sqd" style="left:743.2px"></div>
<div class="sqd" style="left:787.6px"></div>
<div class="sq" style="left:810px;background:#3a3a42"></div>
<div class="sq" style="left:832.2px;background:#3a3a42"></div>
<div class="sq" style="left:854.5px;background:#3a3a42"></div>
<div class="sq" style="left:876.8px;background:#3b3b43"></div>
<div class="sq" style="left:899px;background:#3d3d45"></div>
<div class="sq" style="left:925.8px;width:9px;border-radius:3.5px;background:#101013"></div>
<div class="sq" style="left:944.2px;background:#48484f"></div>
<div class="sq" style="left:966.4px;background:#424249"></div>
<div class="sq" style="left:988.7px;background:#56565d"></div>
</div>
</div>
</body></html>
